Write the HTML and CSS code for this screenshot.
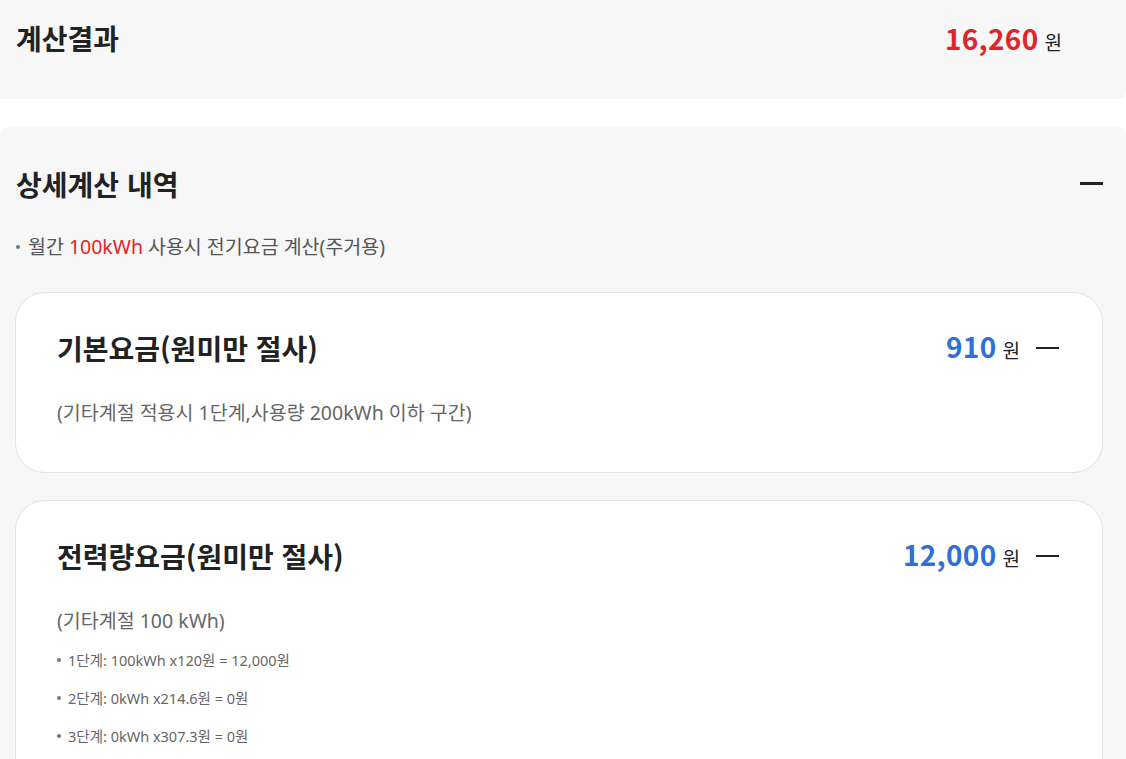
FILE: index.html
```html
<!DOCTYPE html>
<html lang="ko">
<head>
  <meta charset="UTF-8" />
  <title>전기요금 계산결과</title>
  <link rel="stylesheet" href="styles.css">
</head>
<body>

  <section class="result">
    <h2>계산결과</h2>
    <div class="total">
      <span class="num red">16,260</span><span class="won">원</span>
    </div>
  </section>

  <section class="detail">
    <div class="detail-head">
      <h2>상세계산 내역</h2>
      <span class="minus big"></span>
    </div>

    <p class="note"><span class="dot"></span>월간 <em>100kWh</em> 사용시 전기요금 계산(주거용)</p>

    <div class="card">
      <div class="card-head">
        <h3>기본요금(원미만 절사)</h3>
        <div class="price">
          <span class="num blue">910</span><span class="won">원</span>
          <span class="minus"></span>
        </div>
      </div>
      <p class="sub">(기타계절 적용시 1단계,사용량 200kWh 이하 구간)</p>
    </div>

    <div class="card">
      <div class="card-head">
        <h3>전력량요금(원미만 절사)</h3>
        <div class="price">
          <span class="num blue">12,000</span><span class="won">원</span>
          <span class="minus"></span>
        </div>
      </div>
      <p class="sub">(기타계절 100 kWh)</p>
      <ul class="steps">
        <li><span class="dot"></span>1단계: 100kWh x120원 = 12,000원</li>
        <li><span class="dot"></span>2단계: 0kWh x214.6원 = 0원</li>
        <li><span class="dot"></span>3단계: 0kWh x307.3원 = 0원</li>
      </ul>
    </div>
  </section>

</body>
</html>
```

FILE: styles.css
```css
* {
  margin: 0;
  padding: 0;
  box-sizing: border-box;
}

body {
  font-family: 'Noto Sans', 'Noto Sans CJK KR', sans-serif;
  background: #fff;
  color: #222;
  width: 1126px;
  overflow: hidden;
}

h2, h3 {
  font-family: 'Noto Sans CJK KR', sans-serif;
  font-size: 28px;
  line-height: 36px;
  font-weight: 700;
  color: #222;
}

.result {
  height: 99px;
  background: #f7f7f7;
  border-radius: 0 0 8px 0;
  padding: 20px 64px 0 16px;
  display: flex;
  justify-content: space-between;
  align-items: flex-start;
}

.total, .price {
  display: flex;
  align-items: baseline;
  line-height: 36px;
}

.num {
  font-family: 'Noto Sans CJK KR', sans-serif;
  font-size: 28px;
  font-weight: 700;
  letter-spacing: 0.3px;
}

.red { color: #e0242a; }
.blue { color: #2f6fd7; }

.won {
  font-family: 'Noto Sans CJK KR', sans-serif;
  font-size: 19px;
  color: #222;
  margin-left: 6px;
}

.detail {
  margin-top: 28px;
  background: #f7f7f7;
  border-radius: 8px 8px 0 0;
  padding: 39px 23px 40px 15px;
  min-height: 632px;
}

.detail-head {
  display: flex;
  justify-content: space-between;
  align-items: center;
  padding-left: 1px;
}

.minus {
  display: inline-block;
  width: 23px;
  height: 2px;
  background: #222;
  margin-left: 16px;
  align-self: center;
}

.minus.big {
  height: 3px;
  margin-top: -2px;
}

.note {
  margin-top: 33px;
  padding-left: 1px;
  font-size: 19.5px;
  line-height: 24px;
  color: #555;
  display: flex;
  align-items: center;
}

.note em {
  font-style: normal;
  color: #e0242a;
  margin: 0 5px;
}

.dot {
  width: 4px;
  height: 4px;
  border-radius: 50%;
  background: #777;
  margin-right: 8px;
  flex-shrink: 0;
}

.card {
  margin-top: 33px;
  width: 1088px;
  background: #fff;
  border: 1px solid #e2e2e5;
  border-radius: 30px;
  padding: 37px 43px 46px 41px;
}

.card + .card {
  margin-top: 27px;
}

.card-head {
  display: flex;
  justify-content: space-between;
  align-items: center;
  height: 36px;
}

.sub {
  margin-top: 34px;
  font-size: 19.5px;
  line-height: 26px;
  color: #666;
}

.steps {
  list-style: none;
  margin-top: 16px;
}

.steps li {
  display: flex;
  align-items: center;
  font-size: 14.5px;
  line-height: 20px;
  color: #666;
  margin-bottom: 18px;
}

.steps .dot {
  margin-right: 7px;
}
```
